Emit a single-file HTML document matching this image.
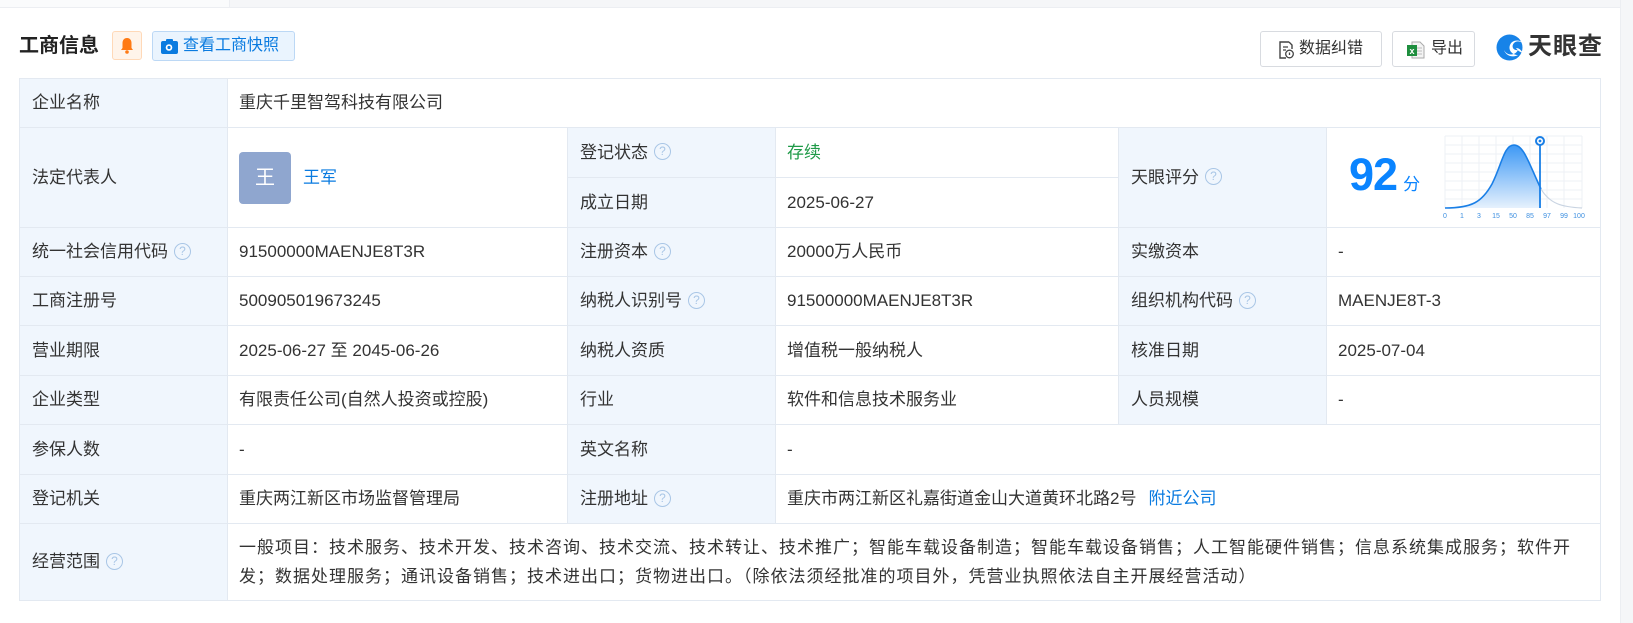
<!DOCTYPE html>
<html><head><meta charset="utf-8">
<style>
*{margin:0;padding:0;box-sizing:border-box}
body{width:1633px;height:623px;background:#fff;font-family:"Liberation Sans","Noto Sans CJK SC",sans-serif;color:#333;position:relative;overflow:hidden}
.topbar{position:absolute;left:0;top:0;width:1633px;height:8px;background:#f5f6f8;border-bottom:1px solid #eceef2}
.topbar .l{position:absolute;left:0;top:0;width:230px;height:7px;background:#fafbfc;border-right:1px solid #eceef2}
.rside{position:absolute;left:1620px;top:0;width:13px;height:623px;background:#f5f6f8;border-left:1px solid #eceef2}
.title{position:absolute;left:19px;top:32px;font-size:20px;font-weight:bold;color:#222;line-height:28px}
.bell{position:absolute;left:112px;top:31px;width:30px;height:29px;border:1px solid #ffd9b8;background:#fff4ea;border-radius:3px}
.snap{position:absolute;left:152px;top:31px;width:143px;height:30px;border:1px solid #bcd8f5;background:#eaf4fe;border-radius:3px;color:#0a7be0;font-size:16px;line-height:28px;padding-left:30px}
.btn{position:absolute;top:31px;height:36px;border:1px solid #d8dbe0;border-radius:3px;background:#fff;font-size:16px;line-height:34px;color:#333}
.logo{position:absolute;left:1496px;top:32px;height:30px;font-size:24px;font-weight:bold;color:#333;line-height:30px;padding-left:32px;letter-spacing:1px}
table{position:absolute;left:19px;top:78px;border-collapse:collapse;table-layout:fixed;width:1581px}
td{border:1px solid #e3e9f1;font-size:17px;line-height:22px;padding:0 11px;vertical-align:middle;white-space:nowrap;overflow:hidden}
td.k{background:#f0f6fd;padding-left:12px}
.q{display:inline-block;width:17px;height:17px;border:1.3px solid #a9c6e6;border-radius:50%;color:#a9c6e6;font-size:12px;line-height:15px;text-align:center;vertical-align:middle;margin-left:6px;margin-top:-3px}
.av{display:inline-block;width:52px;height:52px;background:#8fa6cf;border-radius:4px;color:#fff;font-size:20px;line-height:52px;text-align:center;vertical-align:middle}
</style></head><body>
<div class="topbar"><div class="l"></div></div>
<div class="rside"></div>
<div class="title">工商信息</div>
<div class="bell"><svg width="28" height="27" viewBox="0 0 28 27"><path d="M14 6c-3 0-4.5 2.3-4.5 5v5l-1.5 2h12l-1.5-2v-5c0-2.7-1.5-5-4.5-5z" fill="#ff7a14"/><circle cx="14" cy="20" r="1.8" fill="#ff7a14"/></svg></div>
<div class="snap"><svg style="position:absolute;left:8px;top:7px" width="17" height="15" viewBox="0 0 17 15"><rect x="0" y="2" width="17" height="13" rx="2" fill="#0a7be0"/><rect x="5" y="0" width="7" height="4" rx="1" fill="#0a7be0"/><circle cx="8" cy="8.5" r="3.3" fill="#fff"/><circle cx="8" cy="8.5" r="1.6" fill="#0a7be0"/></svg>查看工商快照</div>
<div class="btn" style="left:1260px;width:122px;padding-left:38px"><svg style="position:absolute;left:17px;top:9px" width="16" height="18" viewBox="0 0 16 18"><path d="M11 1H2v16h6M11 1l3 3v4" fill="none" stroke="#444" stroke-width="1.4"/><path d="M5 6h5M5 9h3" stroke="#444" stroke-width="1.3"/><circle cx="11.5" cy="13" r="3.8" fill="none" stroke="#444" stroke-width="1.3"/><path d="M11.5 11.5v2.5" stroke="#444" stroke-width="1.3"/></svg>数据纠错</div>
<div class="btn" style="left:1392px;width:83px;padding-left:38px"><svg style="position:absolute;left:14px;top:9px" width="18" height="18" viewBox="0 0 18 18"><path d="M5 1h8l4 4v12H5z" fill="#f4f4f4" stroke="#aaa"/><path d="M9 7h6M9 10h6M9 13h6" stroke="#bbb"/><rect x="0" y="4" width="10" height="11" fill="#1e8e3e"/><text x="5" y="13" font-size="9" font-weight="bold" fill="#fff" text-anchor="middle" font-family="Liberation Sans">x</text></svg>导出</div>
<div class="logo"><svg style="position:absolute;left:0;top:2px" width="28" height="27" viewBox="0 0 28 27"><circle cx="13.5" cy="13.5" r="13" fill="#1783e8"/><path d="M27 9c-4-4-11-3-13 2-2 5 2 10 8 10-5 3-12 1-14-5 3 6 11 6 14 0-5 1-7-4-4-7 3-3 7-1 9 0z" fill="#fff"/><path d="M20 14c3 0 5 2 7 5-3-1-5-2-7-5z" fill="#fff"/></svg>天眼查</div>

<table>
<colgroup><col style="width:208px"><col style="width:340px"><col style="width:208px"><col style="width:343px"><col style="width:208px"><col style="width:274px"></colgroup>
<tr style="height:49px"><td class="k">企业名称</td><td colspan="5">重庆千里智驾科技有限公司</td></tr>
<tr style="height:50px"><td class="k" rowspan="2">法定代表人</td><td rowspan="2"><span class="av">王</span><span style="color:#0a7be0;margin-left:12px;vertical-align:middle">王军</span></td><td class="k">登记状态<span class="q">?</span></td><td style="color:#1f9a48">存续</td><td class="k" rowspan="2">天眼评分<span class="q">?</span></td><td rowspan="2" style="position:relative;padding:0">
<div style="position:absolute;left:22px;top:22px;font-size:45px;line-height:50px;font-weight:bold;color:#0a84ff;font-family:'Liberation Sans',sans-serif;letter-spacing:-1px">92<span style="font-size:17px;font-weight:normal;margin-left:6px">分</span></div>
<svg style="position:absolute;left:110px;top:6px" width="150" height="92" viewBox="0 0 150 92">
<defs><linearGradient id="g" x1="0" y1="0" x2="0" y2="1"><stop offset="0" stop-color="#3d98f5"/><stop offset="1" stop-color="#e6f1fd"/></linearGradient></defs>
<g stroke="#edf1f6" stroke-width="1">
<path d="M8 2V74M25 2V74M42 2V74M59 2V74M76 2V74M93 2V74M110 2V74M127 2V74M145 2V74"/>
<path d="M8 2H145M8 11H145M8 20H145M8 29H145M8 38H145M8 47H145M8 56H145M8 65H145"/>
</g>
<path d="M8 74C35 74 45 68 55 50C65 30 67 11 77 11C87 11 92 30 104 55L104 74Z" fill="url(#g)"/>
<path d="M8 74C35 74 45 68 55 50C65 30 67 11 77 11C87 11 92 30 104 55" fill="none" stroke="#1a7fe6" stroke-width="1.6"/>
<path d="M104 55C113 70 125 73 145 74" fill="none" stroke="#c9d4e2" stroke-width="1.2"/>
<path d="M103 10V74" stroke="#1a7fe6" stroke-width="1.8"/>
<circle cx="103" cy="7" r="4" fill="#fff" stroke="#1a7fe6" stroke-width="2"/><circle cx="103" cy="7" r="1.4" fill="#1a7fe6"/>
<g font-size="7" fill="#3d8fe0" font-family="Liberation Sans" text-anchor="middle"><text x="8" y="84">0</text><text x="25" y="84">1</text><text x="42" y="84">3</text><text x="59" y="84">15</text><text x="76" y="84">50</text><text x="93" y="84">85</text><text x="110" y="84">97</text><text x="127" y="84">99</text><text x="142" y="84">100</text></g>
</svg></td></tr>
<tr style="height:50px"><td class="k">成立日期</td><td>2025-06-27</td></tr>
<tr style="height:49px"><td class="k">统一社会信用代码<span class="q">?</span></td><td>91500000MAENJE8T3R</td><td class="k">注册资本<span class="q">?</span></td><td>20000万人民币</td><td class="k">实缴资本</td><td>-</td></tr>
<tr style="height:49px"><td class="k">工商注册号</td><td>500905019673245</td><td class="k">纳税人识别号<span class="q">?</span></td><td>91500000MAENJE8T3R</td><td class="k">组织机构代码<span class="q">?</span></td><td>MAENJE8T-3</td></tr>
<tr style="height:50px"><td class="k">营业期限</td><td>2025-06-27 至 2045-06-26</td><td class="k">纳税人资质</td><td>增值税一般纳税人</td><td class="k">核准日期</td><td>2025-07-04</td></tr>
<tr style="height:49px"><td class="k">企业类型</td><td>有限责任公司(自然人投资或控股)</td><td class="k">行业</td><td>软件和信息技术服务业</td><td class="k">人员规模</td><td>-</td></tr>
<tr style="height:50px"><td class="k">参保人数</td><td>-</td><td class="k">英文名称</td><td colspan="3">-</td></tr>
<tr style="height:49px"><td class="k">登记机关</td><td>重庆两江新区市场监督管理局</td><td class="k">注册地址<span class="q">?</span></td><td colspan="3">重庆市两江新区礼嘉街道金山大道黄环北路2号<span style="color:#0a7be0;margin-left:12px">附近公司</span></td></tr>
<tr style="height:77px"><td class="k">经营范围<span class="q">?</span></td><td colspan="5" style="line-height:29px;letter-spacing:1px;font-size:17px">一般项目：技术服务、技术开发、技术咨询、技术交流、技术转让、技术推广；智能车载设备制造；智能车载设备销售；人工智能硬件销售；信息系统集成服务；软件开<br>发；数据处理服务；通讯设备销售；技术进出口；货物进出口。（除依法须经批准的项目外，凭营业执照依法自主开展经营活动）</td></tr>
</table>
</body></html>
